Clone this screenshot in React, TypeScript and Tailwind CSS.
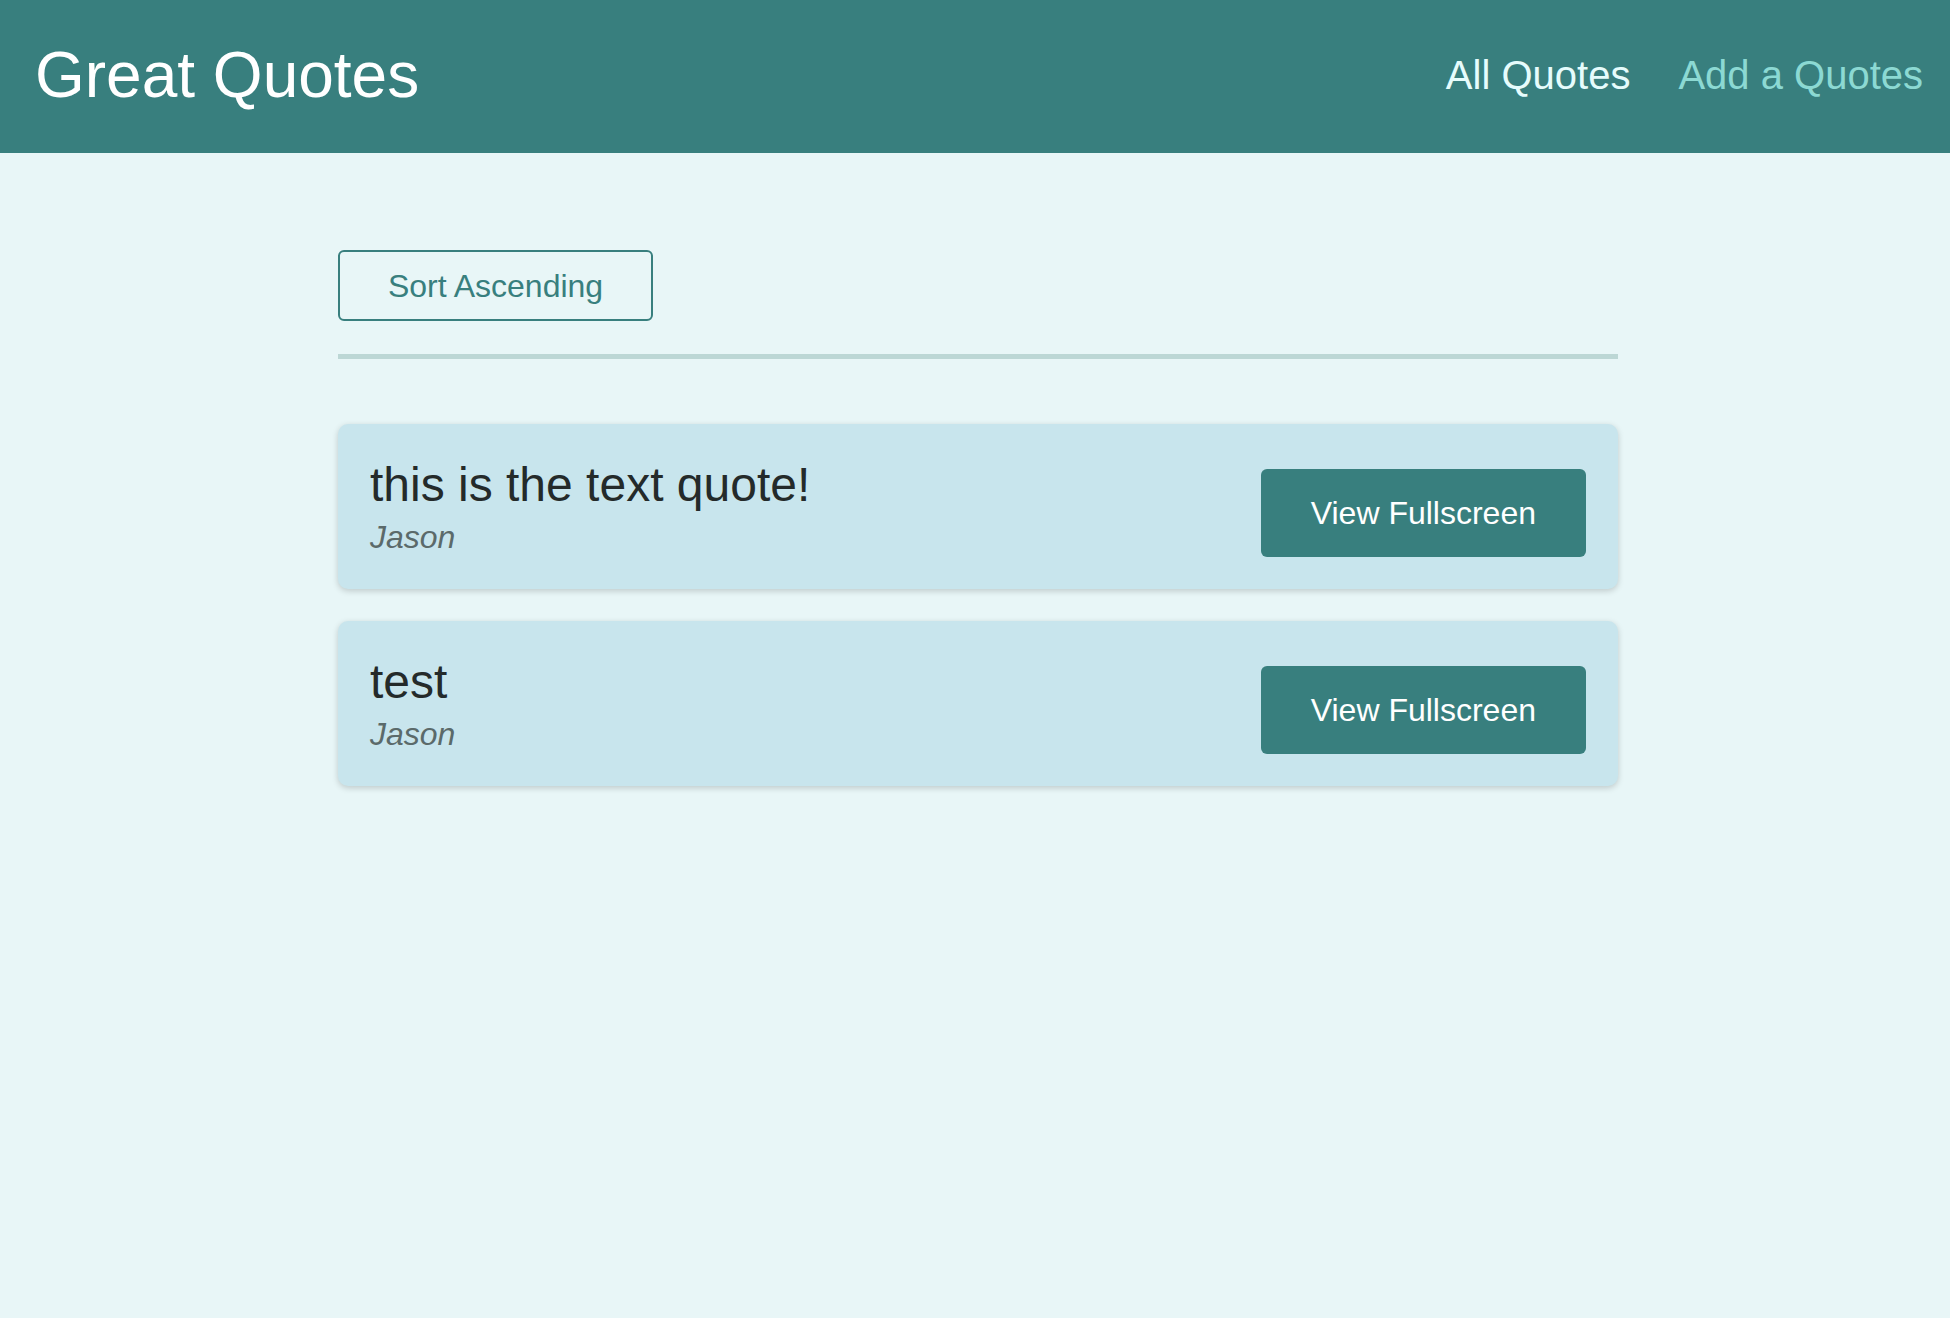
import React from "react"

const quotes = [
  { id: "q1", text: "this is the text quote!", author: "Jason" },
  { id: "q2", text: "test", author: "Jason" },
]

function QuoteItem({ text, author }: { text: string; author: string }) {
  return (
    <li className="flex items-center justify-between rounded-[10px] bg-[#c8e5ed] px-8 py-8 shadow-[0_2px_6px_rgba(0,0,0,0.18)]">
      <figure>
        <blockquote className="text-[48px] leading-[55px] text-[#242a2a]">
          <p>{text}</p>
        </blockquote>
        <figcaption className="mt-[7px] text-[32px] leading-[37px] italic text-[#5b6a6a]">{author}</figcaption>
      </figure>
      <a
        href="#"
        className="mt-[13px] rounded-md bg-[#387f7e] px-[50px] py-[25px] text-[32px] leading-[38px] text-white hover:bg-[#2f6e6d]"
      >
        View Fullscreen
      </a>
    </li>
  )
}

export default function App() {
  return (
    <div className="min-h-screen bg-[#e8f6f7] font-['Liberation_Sans',Arial,sans-serif]">
      {/* Header */}
      <header className="flex h-[153px] items-center justify-between bg-[#387f7e] pb-1 pl-[35px] pr-[27px]">
        <div className="text-[64px] text-white">Great Quotes</div>
        <nav>
          <ul className="flex items-center gap-[48px] text-[40px]">
            <li>
              <a href="#" className="text-[#e6fcfc]">
                All Quotes
              </a>
            </li>
            <li>
              <a href="#" className="text-[#8cd9d3] hover:text-[#e6fcfc]">
                Add a Quotes
              </a>
            </li>
          </ul>
        </nav>
      </header>

      <main className="ml-[338px] w-[1280px] pt-[97px]">
        <div className="border-b-[5px] border-[#bcd7d5] pb-[33px]">
          <button className="h-[71px] w-[315px] rounded-md border-2 border-[#387f7e] text-[32px] text-[#387f7e]">
            Sort Ascending
          </button>
        </div>

        <ul className="mt-[65px] flex flex-col gap-8">
          {quotes.map((q) => (
            <QuoteItem key={q.id} text={q.text} author={q.author} />
          ))}
        </ul>
      </main>
    </div>
  )
}
